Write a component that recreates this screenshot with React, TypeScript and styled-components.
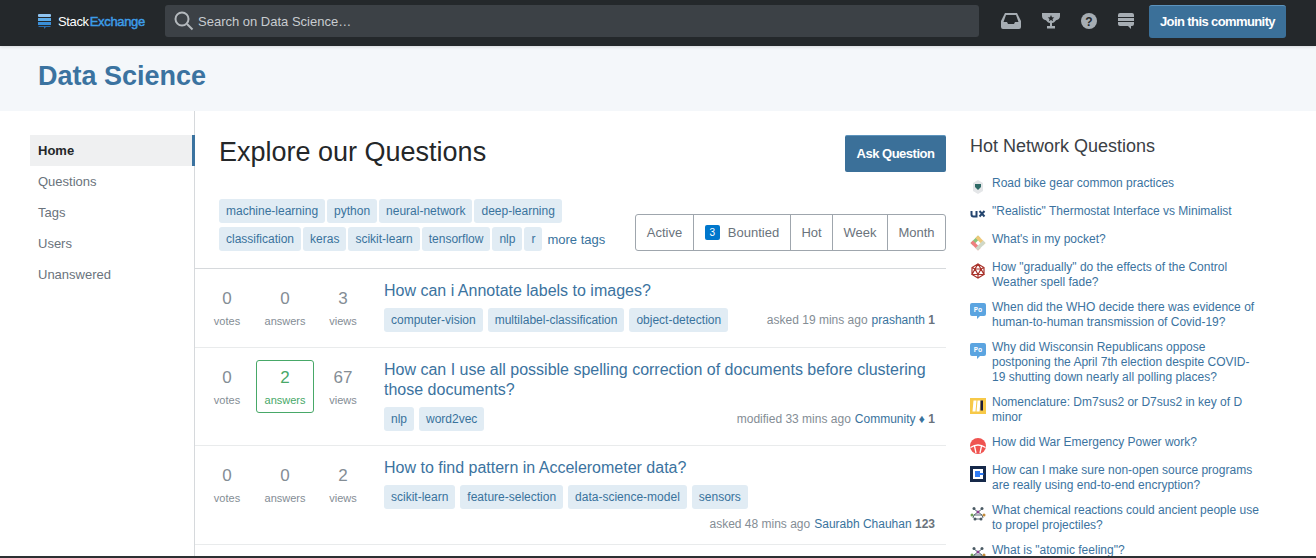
import React from 'react';
import styled, { createGlobalStyle } from 'styled-components';

const GlobalStyle = createGlobalStyle`
  html, body { margin: 0; padding: 0; height: 100%; overflow: hidden; background: #fff; }
  body { font-family: "Liberation Sans", Arial, sans-serif; font-size: 13px; color: #242729; }
  * { box-sizing: border-box; }
`;

const Page = styled.div`
  height: 558px;
  display: flex;
  flex-direction: column;
  overflow: hidden;
`;

const TopBar = styled.header`
  height: 46px;
  flex: none;
  display: flex;
  align-items: center;
  background: #24282b;
  padding: 0 30px 4px 38px;
  box-shadow: 0 1px 3px rgba(0, 0, 0, 0.12);
  position: relative;
  z-index: 1;
`;

const Logo = styled.div`
  width: 127px;
  flex: none;
  display: flex;
  align-items: center;
  font-size: 13px;
  letter-spacing: -0.35px;
  color: #fff;
  svg { margin-right: 7px; }
  span { color: #3d9de8; margin-left: 1px; -webkit-text-stroke: 0.45px #3d9de8; }
`;

const Search = styled.div`
  width: 814px;
  height: 32px;
  flex: none;
  border-radius: 3px;
  background: #3c4146;
  display: flex;
  align-items: center;
  padding-left: 9px;
  color: #c8ccd0;
  font-size: 13px;
  svg { margin-right: 4px; }
`;

const TopIcons = styled.div`
  display: flex;
  align-items: center;
  margin-left: 22px;
  gap: 21px;
  width: 148px;
`;

const JoinButton = styled.div`
  width: 137px;
  height: 33px;
  flex: none;
  display: flex;
  align-items: center;
  justify-content: center;
  background: #3b7099;
  border-top: 1px solid #5d94bd;
  border-radius: 3px;
  color: #fff;
  font-size: 13px;
  font-weight: bold;
  letter-spacing: -0.6px;
`;

const SiteHeader = styled.div`
  height: 65px;
  flex: none;
  background: #f4f7fa;
  padding: 14px 0 0 38px;
  font-size: 27px;
  font-weight: bold;
  line-height: 33px;
  color: #3b73a0;
`;

const Body = styled.div`
  flex: 1;
  min-height: 0;
  display: flex;
  overflow: hidden;
`;

const LeftNav = styled.nav`
  width: 195px;
  flex: none;
  padding: 24px 0 0 30px;
  border-right: 1px solid #d6d9dc;
`;

const NavItem = styled.div<{ $active?: boolean }>`
  height: 31px;
  display: flex;
  align-items: center;
  padding-left: 8px;
  margin-right: -1px;
  font-size: 13px;
  color: ${p => (p.$active ? '#242729' : '#6a737c')};
  font-weight: ${p => (p.$active ? 'bold' : 'normal')};
  background: ${p => (p.$active ? '#eff0f1' : 'transparent')};
  border-right: ${p => (p.$active ? '3px solid #3b73a0' : 'none')};
`;

const Main = styled.main`
  width: 751px;
  flex: none;
`;

const MainHead = styled.div`
  padding: 24px 0 0 24px;
  display: flex;
  justify-content: space-between;
  align-items: flex-start;
  height: 88px;
`;

const Title = styled.h1`
  margin: 1px 0 0;
  font-size: 27px;
  font-weight: normal;
  line-height: 33px;
  color: #242729;
`;

const AskButton = styled.div`
  width: 101px;
  height: 37px;
  padding-bottom: 2px;
  display: flex;
  align-items: center;
  justify-content: center;
  background: #3b7099;
  border-top: 1px solid #5d94bd;
  border-radius: 2px;
  color: #fff;
  font-size: 13px;
  font-weight: bold;
  letter-spacing: -0.5px;
`;

const FilterRow = styled.div`
  display: flex;
  justify-content: space-between;
  align-items: flex-end;
  padding-left: 24px;
  height: 70px;
  padding-bottom: 17px;
  border-bottom: 1px solid #d6d9dc;
`;

const TagCloud = styled.div`
  width: 400px;
  display: flex;
  flex-wrap: wrap;
  align-items: center;
  gap: 4px 2px;
`;

const Tag = styled.span`
  height: 24px;
  display: inline-flex;
  align-items: center;
  padding: 0 7px;
  border-radius: 3px;
  background: #e1ecf4;
  color: #39739d;
  font-size: 12px;
  white-space: nowrap;
`;

const MoreTags = styled.span`
  margin-left: 3px;
  color: #39739d;
  font-size: 13px;
`;

const Tabs = styled.div`
  display: flex;
  height: 37px;
  border: 1px solid #9fa6ad;
  border-radius: 3px;
`;

const TabItem = styled.div<{ $width: number }>`
  width: ${p => p.$width}px;
  display: flex;
  align-items: center;
  justify-content: center;
  color: #6a737c;
  font-size: 13px;
  border-right: 1px solid #9fa6ad;
  &:last-child { border-right: none; }
`;

const BountyCount = styled.span`
  width: 15px;
  height: 15px;
  margin-right: 8px;
  display: inline-flex;
  align-items: center;
  justify-content: center;
  border-radius: 2px;
  background: #0077cc;
  color: #fff;
  font-size: 10px;
`;

const Row = styled.div`
  display: flex;
  padding: 12px 0 0 3px;
  border-bottom: 1px solid #e9ebec;
`;

const Stats = styled.div`
  width: 186px;
  flex: none;
  display: flex;
`;

const Stat = styled.div<{ $answered?: boolean }>`
  width: 58px;
  height: 53px;
  display: flex;
  flex-direction: column;
  align-items: center;
  padding-top: 7px;
  color: ${p => (p.$answered ? '#48a868' : '#848d95')};
  border: 1px solid ${p => (p.$answered ? '#48a868' : 'transparent')};
  border-radius: 3px;
`;

const StatNum = styled.div`
  font-size: 17px;
  line-height: 20px;
`;

const StatLabel = styled.div`
  font-size: 11px;
  line-height: 15px;
  margin-top: 5px;
`;

const Summary = styled.div`
  flex: 1;
  min-width: 0;
`;

const QuestionTitle = styled.div`
  font-size: 16px;
  line-height: 20px;
  color: #3b73a0;
  padding-right: 10px;
`;

const TagLine = styled.div<{ $stack?: boolean }>`
  margin-top: 7px;
  min-height: 24px;
  display: flex;
  flex-wrap: wrap;
  justify-content: space-between;
  align-items: flex-start;
  padding-bottom: ${p => (p.$stack ? '13px' : '14.5px')};
`;

const QuestionTags = styled.div`
  display: flex;
  gap: 5px;
`;

const Meta = styled.div<{ $stack?: boolean }>`
  margin-top: ${p => (p.$stack ? '8px' : '5px')};
  margin-left: auto;
  padding-right: 11px;
  font-size: 12px;
  color: #848d95;
  white-space: nowrap;
  b { color: #6a737c; }
  span { color: #39739d; margin-left: 4px; }
`;

const RightCol = styled.aside`
  width: 370px;
  flex: none;
  padding: 24px 0 0 24px;
`;

const HotTitle = styled.h2`
  margin: 0 0 19px;
  font-size: 18px;
  font-weight: normal;
  line-height: 22px;
  color: #3b4045;
`;

const HotItem = styled.div`
  display: flex;
  min-height: 18px;
  margin-bottom: 10px;
  font-size: 12px;
  line-height: 15px;
  color: #3b73a0;
  svg { flex: none; margin: 3px 6px -1px 0; }
`;

const HotText = styled.div`
  width: 268px;
`;

const BottomEdge = styled.div`
  height: 2px;
  flex: none;
  background: #2d3033;
`;

const IconSvg = ({ children }: { children: React.ReactNode }) => (
  <svg width="16" height="16" viewBox="0 0 16 16">{children}</svg>
);

const Molecule = () => (
  <IconSvg>
    <g stroke="#5a6a74" strokeWidth="1" fill="none">
      <path d="M4 3l4 3 4-3M8 6L4 9l-1 3M8 6l4 3 1 3M4 9h8M5 13h6" />
    </g>
    <circle cx="4" cy="2.500" r="1.500" fill="#4a5a64" />
    <circle cx="12" cy="2.500" r="1.500" fill="#4a5a64" />
    <circle cx="8" cy="6" r="1.500" fill="#8a3f8f" />
    <circle cx="2" cy="9" r="1.500" fill="#6f9f57" />
    <circle cx="14" cy="9" r="1.500" fill="#c28a3a" />
    <circle cx="5" cy="13" r="1.500" fill="#4a5a64" />
    <circle cx="11" cy="13" r="1.500" fill="#4a5a64" />
  </IconSvg>
);

const PoBubble = () => (
  <IconSvg>
    <path d="M2 0h12a2 2 0 0 1 2 2v9a2 2 0 0 1-2 2H10l-3 3v-3H2a2 2 0 0 1-2-2V2a2 2 0 0 1 2-2z" fill="#5ba4e0" />
    <text x="8" y="9" fontSize="7" fontWeight="bold" fill="#fff" textAnchor="middle" fontFamily="Liberation Mono, monospace">Po</text>
  </IconSvg>
);

const hotQuestions: { icon: React.ReactNode; text: string }[] = [
  {
    icon: (
      <IconSvg>
        <path d="M8 1l5 3v8l-5 3-5-3V4z" fill="#e4e6e8" />
        <path d="M5 5h6v3l-3 3-3-3z" fill="#2f6a66" />
      </IconSvg>
    ),
    text: 'Road bike gear common practices',
  },
  {
    icon: (
      <IconSvg>
        <path d="M1.500 4v3.500a2 2 0 0 0 2 2h3V4" fill="none" stroke="#24456e" strokeWidth="2" />
        <path d="M9.500 4l5 5.500M14.500 4l-5 5.500" stroke="#24456e" strokeWidth="2" />
      </IconSvg>
    ),
    text: '"Realistic" Thermostat Interface vs Minimalist',
  },
  {
    icon: (
      <IconSvg>
        <g fill="none" strokeWidth="3.500" strokeLinecap="square">
          <path d="M3 8l5-5" stroke="#8cc47c" />
          <path d="M13 8L8 3" stroke="#f0c878" />
          <path d="M8 13L3 8" stroke="#ef7f7f" />
          <path d="M8 13l5-5" stroke="#cfd8c8" />
        </g>
      </IconSvg>
    ),
    text: "What's in my pocket?",
  },
  {
    icon: (
      <IconSvg>
        <path d="M8 1l6 3.500v7L8 15l-6-3.500v-7zM8 1l3 5H5zM5 6l3 5.500L11 6M2 4.500L5 6l-3 5.500 6 0 6 0L11 6l3-1.500M8 11.500V15" fill="none" stroke="#a8322a" strokeWidth="1.200" />
      </IconSvg>
    ),
    text: 'How "gradually" do the effects of the Control Weather spell fade?',
  },
  { icon: <PoBubble />, text: 'When did the WHO decide there was evidence of human-to-human transmission of Covid-19?' },
  {
    icon: <PoBubble />,
    text: 'Why did Wisconsin Republicans oppose postponing the April 7th election despite COVID-19 shutting down nearly all polling places?',
  },
  {
    icon: (
      <IconSvg>
        <rect width="16" height="16" fill="#f7c948" />
        <path d="M3.500 2.500h3l-1 11h-3zM7.500 2.500h3l-1 11h-3z" fill="#fff" />
        <rect x="10.500" y="2.500" width="2.500" height="10" fill="#1d1d3a" />
      </IconSvg>
    ),
    text: 'Nomenclature: Dm7sus2 or D7sus2 in key of D minor',
  },
  {
    icon: (
      <IconSvg>
        <circle cx="8" cy="8" r="8" fill="#ef5350" />
        <path d="M0.500 9.500Q8 4.500 15.500 9.500M4.500 8l1.500 7M11.500 8l-1.500 7" fill="none" stroke="#fff" strokeWidth="1.300" />
      </IconSvg>
    ),
    text: 'How did War Emergency Power work?',
  },
  {
    icon: (
      <IconSvg>
        <rect width="16" height="16" fill="#16294a" />
        <rect x="3" y="3" width="10" height="10" fill="#fff" />
        <path d="M5 5h5v2h3.500v2H10v2H5z" fill="#2f7cf6" />
      </IconSvg>
    ),
    text: 'How can I make sure non-open source programs are really using end-to-end encryption?',
  },
  { icon: <Molecule />, text: 'What chemical reactions could ancient people use to propel projectiles?' },
  { icon: <Molecule />, text: 'What is "atomic feeling"?' },
];

const pageTags = [
  'machine-learning', 'python', 'neural-network', 'deep-learning',
  'classification', 'keras', 'scikit-learn', 'tensorflow', 'nlp', 'r',
];

const questions = [
  {
    votes: 0, answers: 0, views: 3,
    title: 'How can i Annotate labels to images?',
    tags: ['computer-vision', 'multilabel-classification', 'object-detection'],
    meta: 'asked 19 mins ago', user: 'prashanth', rep: '1',
  },
  {
    votes: 0, answers: 2, views: 67,
    title: 'How can I use all possible spelling correction of documents before clustering those documents?',
    tags: ['nlp', 'word2vec'],
    meta: 'modified 33 mins ago', user: 'Community \u2666', rep: '1',
  },
  {
    votes: 0, answers: 0, views: 2,
    title: 'How to find pattern in Accelerometer data?',
    tags: ['scikit-learn', 'feature-selection', 'data-science-model', 'sensors'],
    meta: 'asked 48 mins ago', user: 'Saurabh Chauhan', rep: '123', stack: true,
  },
];

export default function App() {
  return (
    <Page>
      <GlobalStyle />
      <TopBar>
        <Logo>
          <svg width="13" height="15" viewBox="0 0 13 15">
            <rect y="0" width="13" height="3" rx="1" fill="#90c4f0" />
            <rect y="4" width="13" height="3" fill="#5cabe8" />
            <rect y="8" width="13" height="3" fill="#3a8fd8" />
            <path d="M0 12h13l-1 1H8l-2 2v-2H1z" fill="#2a6fb0" />
          </svg>
          Stack<span>Exchange</span>
        </Logo>
        <Search>
          <svg width="20" height="20" viewBox="0 0 20 20" fill="none" stroke="#b4b9bd" strokeWidth="2">
            <circle cx="8" cy="8" r="6.500" />
            <path d="M13 13l5.500 5.500" />
          </svg>
          Search on Data Science…
        </Search>
        <TopIcons>
          <svg width="20" height="16" viewBox="0 0 20 16">
            <path d="M4 0h12l4 8v6a2 2 0 0 1-2 2H2a2 2 0 0 1-2-2V8zM5 2L2.500 9H6l1 2h6l1-2h3.500L15 2z" fill="#a6adb3" fillRule="evenodd" />
          </svg>
          <svg width="18" height="16" viewBox="0 0 18 16">
            <path d="M0 0h18v3c0 2.500-1.800 4-4 4.200C13 8.800 11.500 9.800 10 10v3h3v2.500H5V13h3v-3C6.500 9.800 5 8.800 4 7.200 1.800 7 0 5.500 0 3z" fill="#a6adb3" />
            <path d="M9 2l1 2.200 2.300.2-1.800 1.500.6 2.300L9 6.900 6.900 8.200l.6-2.300-1.800-1.500L8 4.200z" fill="#24282b" />
          </svg>
          <svg width="16" height="16" viewBox="0 0 16 16">
            <circle cx="8" cy="8" r="8" fill="#a6adb3" />
            <text x="8" y="12.500" fontSize="12" fontWeight="bold" fill="#24282b" textAnchor="middle" fontFamily="Liberation Sans, sans-serif">?</text>
          </svg>
          <svg width="16" height="17" viewBox="0 0 16 17">
            <path d="M2 0h12a2 2 0 0 1 2 2v2H0V2a2 2 0 0 1 2-2zM0 5h16v3H0zM0 9h16v2a2 2 0 0 1-2 2h-1v3l-3-3H2a2 2 0 0 1-2-2z" fill="#a6adb3" />
          </svg>
        </TopIcons>
        <JoinButton>Join this community</JoinButton>
      </TopBar>
      <SiteHeader>Data Science</SiteHeader>
      <Body>
        <LeftNav>
          <NavItem $active>Home</NavItem>
          <NavItem>Questions</NavItem>
          <NavItem>Tags</NavItem>
          <NavItem>Users</NavItem>
          <NavItem>Unanswered</NavItem>
        </LeftNav>
        <Main>
          <MainHead>
            <Title>Explore our Questions</Title>
            <AskButton>Ask Question</AskButton>
          </MainHead>
          <FilterRow>
            <TagCloud>
              {pageTags.map(t => <Tag key={t}>{t}</Tag>)}
              <MoreTags>more tags</MoreTags>
            </TagCloud>
            <Tabs>
              <TabItem $width={58}>Active</TabItem>
              <TabItem $width={97}><BountyCount>3</BountyCount>Bountied</TabItem>
              <TabItem $width={42}>Hot</TabItem>
              <TabItem $width={55}>Week</TabItem>
              <TabItem $width={57}>Month</TabItem>
            </Tabs>
          </FilterRow>
          {questions.map(q => (
            <Row key={q.title}>
              <Stats>
                <Stat><StatNum>{q.votes}</StatNum><StatLabel>votes</StatLabel></Stat>
                <Stat $answered={q.answers > 0}><StatNum>{q.answers}</StatNum><StatLabel>answers</StatLabel></Stat>
                <Stat><StatNum>{q.views}</StatNum><StatLabel>views</StatLabel></Stat>
              </Stats>
              <Summary>
                <QuestionTitle>{q.title}</QuestionTitle>
                <TagLine $stack={q.stack}>
                  <QuestionTags>{q.tags.map(t => <Tag key={t}>{t}</Tag>)}</QuestionTags>
                  <Meta $stack={q.stack}>{q.meta}<span>{q.user}</span> <b>{q.rep}</b></Meta>
                </TagLine>
              </Summary>
            </Row>
          ))}
        </Main>
        <RightCol>
          <HotTitle>Hot Network Questions</HotTitle>
          {hotQuestions.map(h => (
            <HotItem key={h.text}>
              {h.icon}
              <HotText>{h.text}</HotText>
            </HotItem>
          ))}
        </RightCol>
      </Body>
      <BottomEdge />
    </Page>
  );
}
